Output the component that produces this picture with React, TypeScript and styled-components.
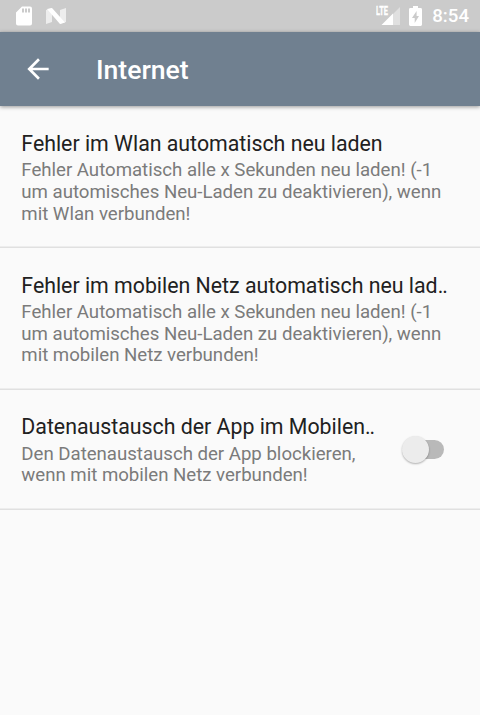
import React from 'react';
import styled, { createGlobalStyle } from 'styled-components';

const GlobalStyle = createGlobalStyle`
  * { box-sizing: border-box; }
  body { margin: 0; background: #fafafa; }
`;

const Screen = styled.div`
  height: 715px;
  overflow: hidden;
  background: #fafafa;
  font-family: Roboto, sans-serif;
  color: #212121;
`;

const StatusBar = styled.header`
  display: flex;
  align-items: center;
  justify-content: space-between;
  height: 32px;
  padding: 0 11px 0 16px;
  background: #cbcbcb;
  color: #fff;
`;

const StatusGroup = styled.div<{ $gap: number }>`
  display: flex;
  align-items: center;
  gap: ${(p) => p.$gap}px;
  height: 32px;
`;

const Icon = styled.svg`
  display: block;
  flex: none;
`;

const NetworkLabel = styled.text`
  font: 700 12px Roboto, sans-serif;
  fill: #fff;
  stroke: #fff;
  stroke-width: 0.3px;
`;

const Clock = styled.span`
  margin-left: 2px;
  font-size: 18.67px;
  font-weight: 500;
  line-height: 32px;
`;

const Toolbar = styled.nav`
  position: relative;
  display: flex;
  align-items: center;
  height: 74.4px;
  padding-left: 21.6px;
  background: #708090;
  box-shadow: 0 1px 4px rgba(0, 0, 0, 0.4);
`;

const BackButton = styled.button`
  width: 32px;
  height: 32px;
  padding: 0;
  border: 0;
  background: none;
`;

const ToolbarTitle = styled.h1`
  margin: 0 0 0 42.4px;
  padding-top: 2px;
  color: #fff;
  font-size: 26.6px;
  font-weight: 500;
  line-height: 32px;
`;

const PreferenceRow = styled.section<{ $height: number }>`
  display: flex;
  align-items: center;
  justify-content: space-between;
  height: ${(p) => p.$height}px;
  padding: 0 32px 0 21.33px;
  box-shadow: inset 0 -1.5px 0 #e0e0e0;
`;

const PreferenceText = styled.div`
  padding-top: 1.2px;
`;

const PreferenceTitle = styled.h2`
  margin: 0 0 2.2px;
  font-size: 21.33px;
  font-weight: 400;
  line-height: 28px;
  letter-spacing: -0.01px;
  white-space: nowrap;
`;

const Ellipsis = styled.span`
  letter-spacing: -1px;
`;

const Summary = styled.p`
  margin: 0;
  color: #7b7b7b;
  font-size: 18.67px;
  line-height: 21.8px;
  letter-spacing: -0.025px;
  white-space: pre;
`;

const Track = styled.button`
  position: relative;
  width: 37px;
  height: 19px;
  margin-right: 4.5px;
  padding: 0;
  border: 0;
  border-radius: 10px;
  background: #b9b9b9;
`;

const Thumb = styled.span`
  position: absolute;
  left: -5px;
  top: -4px;
  width: 27px;
  height: 27px;
  border-radius: 50%;
  background: #ececec;
  box-shadow: 0 1px 2px rgba(0, 0, 0, 0.3);
`;

const preferences = [
  {
    title: 'Fehler im Wlan automatisch neu laden',
    summary:
      'Fehler Automatisch alle x Sekunden neu laden! (-1\num automisches Neu-Laden zu deaktivieren), wenn\nmit Wlan verbunden!',
    height: 141.6,
  },
  {
    title: 'Fehler im mobilen Netz automatisch neu lad',
    clipped: true,
    summary:
      'Fehler Automatisch alle x Sekunden neu laden! (-1\num automisches Neu-Laden zu deaktivieren), wenn\nmit mobilen Netz verbunden!',
    height: 141.6,
  },
  {
    title: 'Datenaustausch der App im Mobilen',
    clipped: true,
    summary: 'Den Datenaustausch der App blockieren,\nwenn mit mobilen Netz verbunden!',
    height: 120.4,
    toggle: true,
  },
];

export default function App() {
  return (
    <Screen>
      <GlobalStyle />
      <StatusBar>
        <StatusGroup $gap={14}>
          <Icon width="16" height="20" viewBox="0 0 16 20">
            <path
              fill="#fff"
              fillRule="evenodd"
              d="M6 .5h8q2 0 2 2v15q0 2-2 2H2q-2 0-2-2v-11zM6 2.5v4h2v-4zm3 0v4h2v-4zm3 0v4h2v-4z"
            />
          </Icon>
          <Icon width="20" height="16" viewBox="0 0 20 16">
            <path fill="#ededed" d="M0 2l6-2v14l-6 2zM14 2l6-2v14l-6 2z" />
            <path fill="#fff" d="M1 1l5-1 13 14.5-5 1.5z" />
          </Icon>
        </StatusGroup>
        <StatusGroup $gap={8}>
          <Icon width="25" height="22" viewBox="0 0 25 22">
            <path fill="#e0e0e0" d="M17 9l7-7v18h-7z" />
            <path fill="#fff" d="M5.5 20L17 8.500V20z" />
            <NetworkLabel x="0" y="10" textLength="12" lengthAdjust="spacingAndGlyphs">
              LTE
            </NetworkLabel>
          </Icon>
          <Icon width="13" height="20" viewBox="0 0 13 20">
            <path
              fill="#fff"
              fillRule="evenodd"
              d="M4 0h5v2h2.6Q13 2 13 3.400v15.200Q13 20 11.600 20H1.400Q0 20 0 18.600V3.400Q0 2 1.400 2H4zM7.600 5L3 12h2.700v5L10 10H7.600z"
            />
          </Icon>
          <Clock>8:54</Clock>
        </StatusGroup>
      </StatusBar>
      <Toolbar>
        <BackButton aria-label="Zurück">
          <Icon width="32" height="32" viewBox="0 0 24 24">
            <path fill="#fff" d="M20 11H7.830l5.590-5.590L12 4l-8 8 8 8 1.410-1.410L7.830 13H20v-2z" />
          </Icon>
        </BackButton>
        <ToolbarTitle>Internet</ToolbarTitle>
      </Toolbar>
      <main>
        {preferences.map((item) => (
          <PreferenceRow key={item.title} $height={item.height}>
            <PreferenceText>
              <PreferenceTitle>
                {item.title}
                {item.clipped && <Ellipsis>..</Ellipsis>}
              </PreferenceTitle>
              <Summary>{item.summary}</Summary>
            </PreferenceText>
            {item.toggle && (
              <Track role="switch" aria-checked={false} aria-label={item.title}>
                <Thumb />
              </Track>
            )}
          </PreferenceRow>
        ))}
      </main>
    </Screen>
  );
}
